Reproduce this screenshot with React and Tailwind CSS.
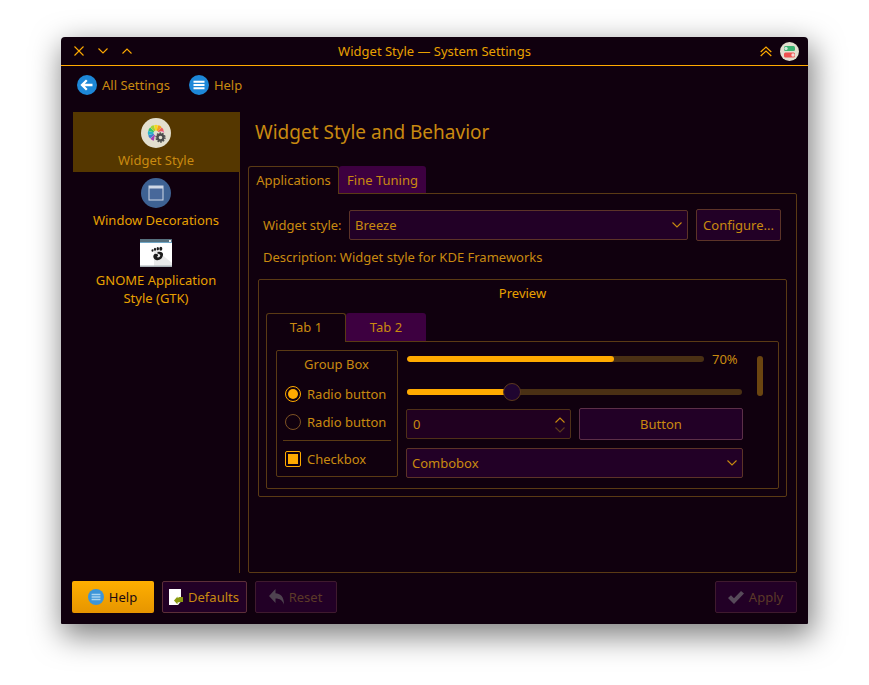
const dim = "text-[#c98a10]";

function Chevron({ className = "", up = false, color = "#c98a10" }) {
  return (
    <svg width="10" height="6" viewBox="0 0 10 6" className={className}>
      <path d={up ? "M.5 5.5 5 1l4.5 4.5" : "M.5.5 5 5 9.500.5"} fill="none" stroke={color} strokeWidth="1.1" />
    </svg>
  );
}

function BackIcon() {
  return (
    <svg width="20" height="20" viewBox="0 0 20 20">
      <circle cx="10" cy="10" r="10" fill="#1d87d8" />
      <path d="M15.500 10H5.500M9.800 5.300 5 10l4.800 4.700" fill="none" stroke="#fff" strokeWidth="2.300" />
    </svg>
  );
}

function MenuIcon({ size = 20, fill = "#1d87d8", bar = "#fff" }) {
  return (
    <svg width={size} height={size} viewBox="0 0 20 20">
      <circle cx="10" cy="10" r="10" fill={fill} />
      <path d="M4.500 5.800h11v2h-11zM4.500 9h11v2h-11zM4.500 12.200h11v2h-11z" fill={bar} />
    </svg>
  );
}

function WheelIcon() {
  const petals = [
    ["#a83fb0", -150],
    ["#3f7fd0", -120],
    ["#27b5c9", -90],
    ["#35c46a", -60],
    ["#a4d233", -30],
    ["#f4d91c", 0],
    ["#f6a21a", 30],
    ["#ef5a5a", 60],
    ["#ee5fa7", 90],
  ];
  return (
    <svg width="30" height="30" viewBox="0 0 30 30">
      <circle cx="15" cy="15" r="15" fill="#e3dfcf" />
      {petals.map(([c, a]) => (
        <path key={a} d="M14.300 12.500 13.100 7.200Q15 6.300 16.900 7.200L15.700 12.500z" fill={c} transform={`rotate(${a} 15 15)`} />
      ))}
      <circle cx="19.500" cy="19.500" r="6" fill="#e3dfcf" />
      <circle cx="19.500" cy="19.500" r="3" fill="none" stroke="#4d4d4d" strokeWidth="2.400" />
      <circle cx="19.500" cy="19.500" r="4.500" fill="none" stroke="#4d4d4d" strokeWidth="1.300" strokeDasharray="1.600 1.200" />
    </svg>
  );
}

function WindowIcon() {
  return (
    <svg width="30" height="30" viewBox="0 0 30 30">
      <circle cx="15" cy="15" r="15" fill="#3e6293" />
      <rect x="8" y="8" width="14" height="14" fill="#48689a" stroke="#cfd8e6" strokeWidth="1" />
      <rect x="8" y="8" width="14" height="2.500" fill="#cfd8e6" />
    </svg>
  );
}

function GnomeIcon() {
  return (
    <svg width="32" height="28" viewBox="0 0 32 28">
      <rect width="32" height="28" fill="#fff" />
      <path d="M14 9 32 24v4H14z" fill="#e9e9e9" />
      <rect width="32" height="4" fill="#56707e" />
      <rect y="3" width="32" height="1" fill="#6fa6c6" />
      <rect x="29" y="1" width="2" height="2" fill="#e8e8e8" />
      <rect y="26.500" width="32" height="1.500" fill="#a8b0b5" />
      <g fill="#1c1c1c">
        <ellipse cx="12.500" cy="11.500" rx="1" ry="1.300" />
        <ellipse cx="15" cy="10.300" rx="1.100" ry="1.500" />
        <ellipse cx="17.800" cy="9.800" rx="1.200" ry="1.700" />
        <ellipse cx="20.800" cy="9.800" rx="1.500" ry="2" />
        <path d="M17.500 13c3-1 6 0 5.500 3-.5 3.500-3.500 6-7 5-2.500-.8-3.500-3.500-2-5.500 1-1.200 2.500-.8 3.500-.2 1 .7.500 2.500-.8 2.500 1 1.300 3.200.5 3.500-1 .2-1.300-1.200-2-2.700-2z" />
      </g>
    </svg>
  );
}

function SwitchIcon() {
  return (
    <svg width="19" height="19" viewBox="0 0 19 19">
      <circle cx="9.500" cy="9.500" r="9.500" fill="#e3dfcf" />
      <rect x="4" y="4" width="11" height="5" rx="1.500" fill="#3cb371" />
      <circle cx="6" cy="6.500" r="1.700" fill="#cfe9d8" />
      <rect x="4" y="10.500" width="11" height="5" rx="1.500" fill="#ef5350" />
      <circle cx="13" cy="13" r="1.700" fill="#f7d5d4" />
    </svg>
  );
}

function Tab({ active, children, className = "" }) {
  return active ? (
    <div className={`relative z-10 flex items-start justify-center pt-[4px] bg-[#10000e] border border-b-0 border-[#5a3a14] rounded-t-[3px] ${dim} ${className}`}>
      {children}
    </div>
  ) : (
    <div className={`flex items-start justify-center pt-[5px] bg-[#3d0040] rounded-t-[3px] ${dim} ${className}`}>{children}</div>
  );
}

function ComboBox({ label, className = "" }) {
  return (
    <div className={`flex items-center justify-between bg-[#220026] border border-[#5c3328] rounded-[2px] pl-[5px] pr-[5px] ${dim} ${className}`}>
      <span>{label}</span>
      <Chevron />
    </div>
  );
}

function Radio({ checked, label }) {
  return (
    <div className={`flex items-center h-[28px] pl-[8px] gap-[6px] ${dim}`}>
      {checked ? (
        <span className="flex items-center justify-center w-[16px] h-[16px] rounded-full border border-[#ffaa00]">
          <span className="w-[10px] h-[10px] rounded-full bg-[#ffaa00]" />
        </span>
      ) : (
        <span className="w-[16px] h-[16px] rounded-full border border-[#7d5224]" />
      )}
      <span>{label}</span>
    </div>
  );
}

function FootButton({ children, className = "" }) {
  return (
    <div className={`flex items-center justify-center h-[32px] w-[82px] rounded-[2px] gap-[5px] pr-[1px] ${className}`}>{children}</div>
  );
}

export default function App() {
  return (
    <div className="min-h-screen bg-white pt-[37px] pl-[61px] font-['Noto_Sans',sans-serif] text-[13px] leading-[18px] overflow-hidden">
      <div className="w-[747px] h-[587px] bg-[#10000e] rounded-t-[4px] rounded-b-[1px] flex flex-col shadow-[3px_10px_30px_2px_rgba(0,0,0,0.5)]">
        {/* title bar */}
        <div className="flex items-center h-[29px] border-b border-[#ffaa00] shrink-0 pl-[13px] pr-[9px]">
          <div className="flex items-center gap-[14px] w-[69px]">
            <svg width="10" height="10" viewBox="0 0 10 10"><path d="M.5.500l9 9M9.500.500l-9 9" stroke="#ffaa00" strokeWidth="1.100" fill="none" /></svg>
            <Chevron color="#ffaa00" />
            <Chevron up color="#ffaa00" />
          </div>
          <div className="flex-1 text-center text-[#e8a000] mr-[34px]">Widget Style — System Settings</div>
          <div className="flex items-center gap-[8px]">
            <svg width="12" height="11" viewBox="0 0 12 11"><path d="M.7 6 6 1l5.300 5M.7 10 6 5l5.300 5" fill="none" stroke="#ffaa00" strokeWidth="1.200" /></svg>
            <SwitchIcon />
          </div>
        </div>
        {/* toolbar */}
        <div className={`flex items-center h-[46px] shrink-0 pl-[16px] pb-[9px] ${dim}`}>
          <BackIcon />
          <span className="ml-[5px] mr-[19px]">All Settings</span>
          <MenuIcon />
          <span className="ml-[5px]">Help</span>
        </div>
        {/* body */}
        <div className="flex flex-1 min-h-0">
          <div className="ml-[12px] w-[167px] h-[461px] border-r border-[#5a3a14] shrink-0 text-center text-[#e8a000]">
            <div className={`-mr-px pr-px flex flex-col items-center h-[60px] bg-[#553700] pt-[6px] ${dim}`}>
              <WheelIcon />
              <span className="mt-[3px]">Widget Style</span>
            </div>
            <div className="flex flex-col items-center h-[60px] pt-[6px]">
              <WindowIcon />
              <span className="mt-[3px]">Window Decorations</span>
            </div>
            <div className="flex flex-col items-center pt-[7px]">
              <GnomeIcon />
              <span className="mt-[4px]">GNOME Application<br />Style (GTK)</span>
            </div>
          </div>
          <div className="flex-1 pl-[8px] pr-[11px] min-w-0">
            <div className={`h-[54px] pl-[7px] pt-[7px] text-[19px] leading-[26px] ${dim}`}>Widget Style and Behavior</div>
            <div className="flex h-[27px]">
              <Tab active className="w-[91px] h-[28px]">Applications</Tab>
              <Tab className="w-[87px]">Fine Tuning</Tab>
            </div>
            <div className="border border-[#5a3a14] h-[380px] rounded-b-[2px] rounded-tr-[2px] pl-[9px] pr-[9px] pt-[15px]">
              <div className="flex items-center h-[32px]">
                <span className={`ml-[5px] w-[86px] shrink-0 ${dim}`}>Widget style:</span>
                <ComboBox label="Breeze" className="w-[339px] h-[30px]" />
                <div className={`ml-[8px] w-[85px] h-[32px] flex items-center justify-center bg-[#220026] border border-[#5c3328] rounded-[2px] ${dim}`}>Configure...</div>
              </div>
              <div className={`ml-[5px] mt-[7px] ${dim}`}>Description: Widget style for KDE Frameworks</div>
              <div className="mt-[13px] w-[529px] h-[218px] border border-[#5a3a14] rounded-[2px] pl-[7px] pr-[7px]">
                <div className="text-center text-[#e8a000] pt-[4px] h-[33px]">Preview</div>
                <div className="flex h-[28px]">
                  <Tab active className="w-[80px] h-[29px]">Tab 1</Tab>
                  <Tab className="w-[80px]">Tab 2</Tab>
                </div>
                <div className="border border-[#5a3a14] w-[513px] h-[148px] rounded-b-[2px] rounded-tr-[2px] pl-[9px] pt-[8px] flex">
                  <div className="w-[122px] h-[127px] border border-[#5a3a14] rounded-[2px] shrink-0 px-[6px]">
                    <div className={`text-center pt-[4px] pr-px h-[29px] ${dim}`}>Group Box</div>
                    <div className="-mx-[6px]">
                      <Radio checked label="Radio button" />
                      <Radio label="Radio button" />
                    </div>
                    <div className="border-t border-[#5a3a14] mt-[4px]" />
                    <div className={`flex items-center gap-[6px] h-[36px] pl-[2px] ${dim}`}>
                      <span className="flex items-center justify-center w-[16px] h-[16px] rounded-[2px] border border-[#ffaa00]">
                        <span className="w-[10px] h-[10px] bg-[#ffaa00]" />
                      </span>
                      <span>Checkbox</span>
                    </div>
                  </div>
                  <div className="ml-[8px] w-[337px] shrink-0">
                    <div className="flex items-center h-[18px] pl-[1px]">
                      <div className="w-[297px] h-[6px] rounded-full bg-[#4a3014] overflow-hidden">
                        <div className="w-[207px] h-full rounded-full bg-[#ffaa00]" />
                      </div>
                      <span className={`ml-[8px] ${dim}`}>70%</span>
                    </div>
                    <div className="relative flex items-center h-[18px] mt-[15px] pl-[1px]">
                      <div className="w-[335px] h-[6px] rounded-full bg-[#4a3014] overflow-hidden">
                        <div className="w-[100px] h-full bg-[#ffaa00]" />
                      </div>
                      <div className="absolute left-[97px] top-0 w-[18px] h-[18px] rounded-full bg-[#1f0530] border border-[#5c3a1c]" />
                    </div>
                    <div className="flex mt-[7px] gap-[8px] items-center">
                      <div className={`relative w-[165px] h-[30px] bg-[#200020] border border-[#4f3018] rounded-[2px] flex items-center pl-[6px] ${dim}`}>
                        0
                        <div className="absolute right-[5px] top-[7px] flex flex-col gap-[4px]">
                          <Chevron up color="#c98a10" />
                          <Chevron color="#5c3a1c" />
                        </div>
                      </div>
                      <div className={`w-[164px] h-[32px] bg-[#220026] border border-[#5c2f48] rounded-[2px] flex items-center justify-center ${dim}`}>Button</div>
                    </div>
                    <ComboBox label="Combobox" className="mt-[8px] w-[337px] h-[30px]" />
                  </div>
                  <div className="ml-[14px] mt-[6px] w-[6px] h-[40px] rounded-full bg-[#6b4510]" />
                </div>
              </div>
            </div>
          </div>
        </div>
        {/* footer */}
        <div className="flex items-center h-[51px] shrink-0 pl-[11px] pr-[11px] pb-[3px]">
          <FootButton className="bg-gradient-to-b from-[#ffaf00] to-[#e69500] text-[#1c0a12]">
            <MenuIcon size={16} fill="#3d95d8" bar="#a9d4f0" />
            <span>Help</span>
          </FootButton>
          <FootButton className={`ml-[8px] w-[85px] bg-[#220026] border border-[#5c2f38] ${dim}`}>
            <svg width="14" height="16" viewBox="0 0 14 16">
              <path d="M0 0h12v12.500L9 16H0z" fill="#fff" />
              <path d="M5 11.500 8.500 7.500v1.500l2-1h3.500v5h-2l-3.500 .5v2z" fill="#8a9a10" />
            </svg>
            <span>Defaults</span>
          </FootButton>
          <FootButton className="ml-[8px] bg-[#220026] border border-[#3f1a2e] text-[#5c3a28]">
            <svg width="15" height="16" viewBox="0 0 15 16"><path d="M6.500 0v4.300C11 4.500 15 7 15 15.500 13.500 11.500 11 9.500 6.500 9.500V14L0 7z" fill="#4f4350" /></svg>
            <span>Reset</span>
          </FootButton>
          <div className="flex-1" />
          <FootButton className="bg-[#220026] border border-[#3f1a2e] text-[#5c3a28]">
            <svg width="16" height="13" viewBox="0 0 16 13"><path d="M0 7l3-2.800 3 3L13 0l3 2.500L6 13z" fill="#574a5a" /></svg>
            <span>Apply</span>
          </FootButton>
        </div>
      </div>
    </div>
  );
}
